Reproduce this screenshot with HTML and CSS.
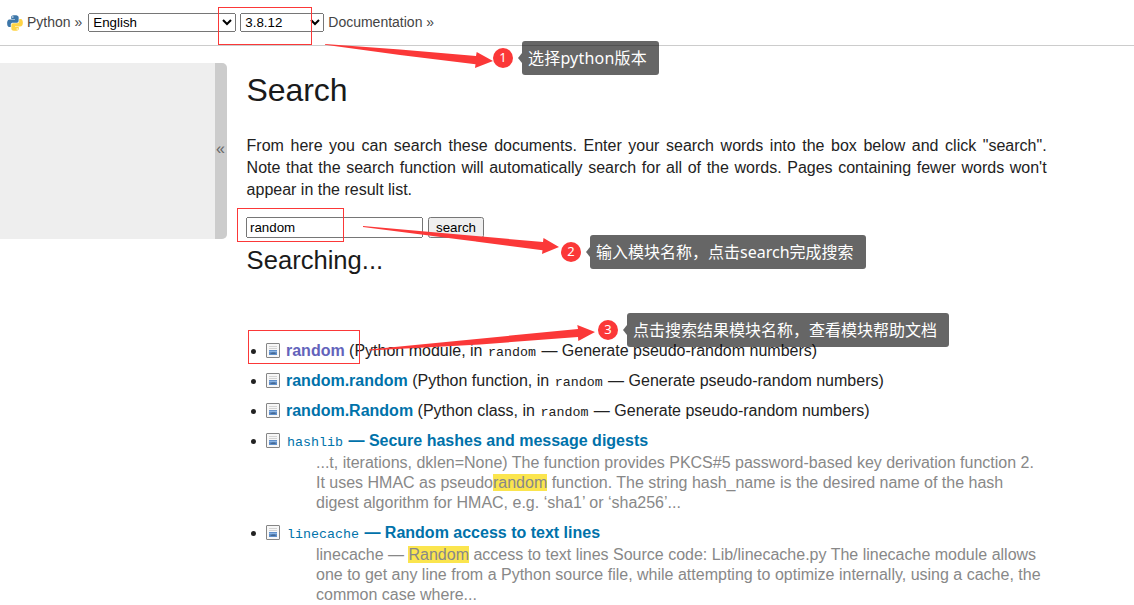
FILE: index.html
```html
<!DOCTYPE html>
<html lang="en">
<head>
    <meta charset="UTF-8">
    <title>Search — Python 3.8.12 documentation</title>
    <link rel="stylesheet" href="styles.css">
</head>
<body>
    <svg class="sprite">
        <symbol id="file" viewBox="0 0 14 15">
            <rect x=".5" y=".5" width="13" height="14" rx=".5" fill="#f7f7f7" stroke="#858585"/>
            <path d="M3 3.5h8M3 5.5h8" stroke="#d3d3d3"/>
            <rect x="3" y="7" width="8" height="5" fill="#5f8fcb"/>
            <path d="M3 8.5h8" stroke="#8db5e2"/>
            <path d="M4 11l2-1.5h3l1 1.5z" fill="#47688f"/>
        </symbol>
    </svg>

    <div class="related">
        <svg class="logo" viewBox="0 0 110 110">
            <path fill="#3d76a8" d="M54 1C27 1 29 13 29 13v14h26v4H18S1 29 1 56s15 26 15 26h10V69s-1-15 15-15h25s14 0 14-14V16S82 1 54 1z"/>
            <circle cx="40" cy="14" r="5" fill="#fff"/>
            <path fill="#ffd445" d="M56 109c27 0 25-12 25-12V83H55v-4h37s17 2 17-25-15-26-15-26H84v13s1 15-15 15H44s-14 0-14 14v24s-2 15 26 15z"/>
            <circle cx="70" cy="96" r="5" fill="#fff"/>
        </svg>
        <span class="crumb">Python »</span>
        <select class="language"><option>English</option></select>
        <select class="version"><option>3.8.12</option></select>
        <span class="crumb">Documentation »</span>
    </div>

    <div class="document">
        <div class="sidebar">
            <div class="collapse">«</div>
        </div>
        <div class="content">
            <h1>Search</h1>
            <p>From here you can search these documents. Enter your search words into the box below and click "search". Note that the search function will automatically search for all of the words. Pages containing fewer words won't appear in the result list.</p>
            <form class="search-form">
                <input class="query" type="text" value="random">
                <input class="submit" type="button" value="search">
            </form>
            <h2>Searching...</h2>
            <ul class="results">
                <li><svg class="icon"><use href="#file"/></svg><a class="visited">random</a> (Python module, in <code>random</code> — Generate pseudo-random numbers)</li>
                <li><svg class="icon"><use href="#file"/></svg><a>random.random</a> (Python function, in <code>random</code> — Generate pseudo-random numbers)</li>
                <li><svg class="icon"><use href="#file"/></svg><a>random.Random</a> (Python class, in <code>random</code> — Generate pseudo-random numbers)</li>
                <li>
                    <svg class="icon"><use href="#file"/></svg><a><code>hashlib</code> — Secure hashes and message digests</a>
                    <div class="context">...t, iterations, dklen=None) The function provides PKCS#5 password-based key derivation function 2. It uses HMAC as pseudo<mark>random</mark> function. The string hash_name is the desired name of the hash digest algorithm for HMAC, e.g. ‘sha1’ or ‘sha256’...</div>
                </li>
                <li>
                    <svg class="icon"><use href="#file"/></svg><a><code>linecache</code> — Random access to text lines</a>
                    <div class="context">linecache — <mark>Random</mark> access to text lines Source code: Lib/linecache.py The linecache module allows one to get any line from a Python source file, while attempting to optimize internally, using a cache, the common case where...</div>
                </li>
            </ul>
        </div>
    </div>

    <!-- Annotations -->
    <svg class="marks" width="1134" height="605">
        <g class="frames">
            <rect x="218.5" y="7.5" width="93" height="37"/>
            <rect x="237.5" y="208.5" width="106" height="33"/>
            <rect x="248.5" y="330.5" width="111" height="33"/>
        </g>
        <g class="arrows">
            <path d="M325 44L400 49.5L476 56L476.7 52L493 61L475 68L475.5 64.3L400 55L325 44.8z"/>
            <path d="M363 226L543 242L543.5 238L559 247L542 254L542.5 250.3L460 239.5L363 227z"/>
            <path d="M369 349.5L578 329L577.3 325L595 332L578.3 341L578 337L480 344.5L369 350.5z"/>
        </g>
    </svg>
    <div class="step step-1"><span class="number">1</span><span class="tip">选择python版本</span></div>
    <div class="step step-2"><span class="number">2</span><span class="tip">输入模块名称，点击search完成搜索</span></div>
    <div class="step step-3"><span class="number">3</span><span class="tip">点击搜索结果模块名称，查看模块帮助文档</span></div>
</body>
</html>
```
FILE: styles.css
```css
body {
    margin: 0;
    height: 605px;
    overflow: hidden;
    background: #fff;
    color: #222;
    font-family: Arial, "Liberation Sans", sans-serif;
    font-size: 16px;
}

.sprite {
    display: none;
}

.related {
    display: flex;
    align-items: center;
    box-sizing: border-box;
    height: 46px;
    padding: 0 0 1px 7px;
    border-bottom: 1px solid #ccc;
    font-size: 14px;
    color: #444;
}

.logo {
    width: 16px;
    height: 16px;
    margin: 1px 4px 0 0;
}

.related select {
    box-sizing: border-box;
    height: 19px;
    margin: 0 4px 0 6px;
    font-family: Arial, "Liberation Sans", sans-serif;
    font-size: 13.333px;
}

.related .language {
    width: 148px;
}

.related .version {
    width: 84px;
    margin-left: 0;
}

.document {
    display: flex;
    align-items: flex-start;
    padding-top: 17px;
}

.sidebar {
    display: flex;
    justify-content: flex-end;
    width: 227px;
    height: 176px;
    border-radius: 0 5px 5px 0;
    overflow: hidden;
    background: #eee;
}

.collapse {
    display: flex;
    align-items: center;
    justify-content: center;
    box-sizing: border-box;
    width: 12px;
    padding: 0 1px 4px 0;
    background: #ccc;
    color: #666;
    font-size: 16px;
}

.content {
    width: 800px;
    padding-left: 19.6px;
}

h1,
h2 {
    margin: 0;
    font-weight: normal;
    color: #1a1a1a;
}

h1 {
    padding-top: 8px;
    font-size: 32px;
    line-height: 38px;
    letter-spacing: -0.1px;
}

.content p {
    margin: 26px 0 16px;
    line-height: 22px;
    text-align: justify;
}

.search-form {
    display: flex;
    gap: 5px;
    margin-left: -0.6px;
}

.search-form input {
    box-sizing: border-box;
    height: 21px;
    font-family: Arial, "Liberation Sans", sans-serif;
    font-size: 13.333px;
}

.query {
    width: 177px;
    padding: 1px 2px;
}

.submit {
    width: 56px;
    padding: 1px 0;
}

h2 {
    margin-top: 7px;
    font-size: 25.6px;
    line-height: 30px;
}

.results {
    margin: 61px 0 0;
    padding-left: 20.4px;
}

.results li {
    padding: 5px 0;
    line-height: 20px;
}

.icon {
    width: 14px;
    height: 15px;
    margin: 0 6px 0 -1px;
    vertical-align: -2px;
}

.results a {
    color: #0072aa;
    font-weight: bold;
}

.results .visited {
    color: #6363bb;
}

code {
    padding: 0 1px;
    font-family: "Liberation Mono", monospace;
    font-size: 13.333px;
    font-weight: normal;
    line-height: 1;
}

.context {
    margin: 2px 0 0 49px;
    color: #888;
}

mark {
    background: #fbe54e;
    color: inherit;
}

.marks {
    position: absolute;
    top: 0;
    left: 0;
}

.frames {
    fill: none;
    stroke: #fb3838;
}

.arrows {
    fill: #fb3838;
}

.step {
    position: absolute;
    display: flex;
    align-items: center;
    gap: 9px;
    height: 34px;
    color: #fff;
    font-family: "Noto Sans", "Noto Sans CJK SC", sans-serif;
}

.step-1 {
    left: 493px;
    top: 41px;
}

.step-1 .tip {
    width: 137px;
    letter-spacing: 0.2px;
}

.step-2 {
    left: 561px;
    top: 235px;
}

.step-3 {
    left: 598px;
    top: 313px;
}

.number {
    width: 20px;
    height: 20px;
    border-radius: 50%;
    background: #fb3838;
    font-size: 13px;
    line-height: 19px;
    text-align: center;
}

.tip {
    position: relative;
    box-sizing: border-box;
    height: 34px;
    padding: 0 12px 0 6px;
    border-radius: 3px;
    background: rgba(0, 0, 0, 0.6);
    font-size: 16px;
    line-height: 34px;
    white-space: nowrap;
}

.tip::before {
    content: "";
    position: absolute;
    left: -4px;
    top: 12px;
    border: 5px solid transparent;
    border-right: 4px solid rgba(0, 0, 0, 0.6);
    border-left: 0;
}
```
